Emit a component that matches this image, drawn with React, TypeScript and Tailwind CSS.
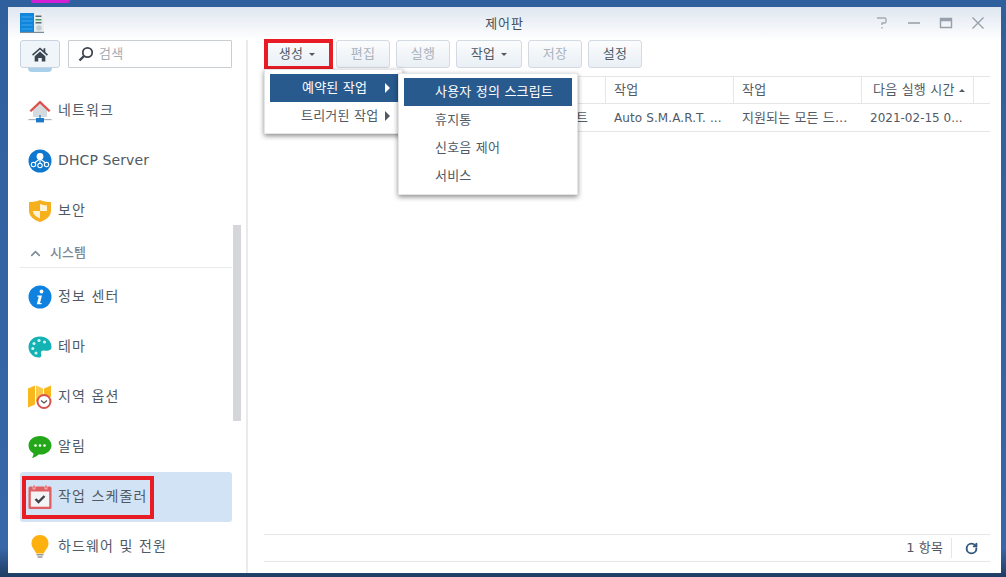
import React from 'react';
import { ChevronUp, RotateCw } from 'lucide-react';

const font = { fontFamily: '"DejaVu Sans", "Noto Sans CJK KR", sans-serif' };

const NetworkIcon = () => (
  <svg viewBox="0 0 24 24" className="w-6 h-6">
    <path d="M5 11 12 4.600l7 6.400v7H5z" fill="#d5dade" />
    <path d="M1.500 11.500 12 1.500l10.500 10-1.700 1.600L12 4.800 3.200 13.100z" fill="#d9534f" />
    <rect x="0.500" y="20" width="23" height="1.200" fill="#a9b4bd" />
    <rect x="11.400" y="16" width="1.200" height="4" fill="#1b79c9" />
    <rect x="8" y="19" width="8" height="4.400" fill="#1b79c9" />
  </svg>
);

const DhcpIcon = () => (
  <svg viewBox="0 0 24 24" className="w-6 h-6">
    <circle cx="12" cy="12" r="11.500" fill="#0e78cf" />
    <circle cx="12" cy="7.500" r="3.400" fill="#fff" />
    <path d="M12 10v5M11 10.500 6.500 14M13 10.500l4.500 3.500" stroke="#fff" strokeWidth="1.100" fill="none" />
    <circle cx="5.500" cy="15.500" r="2.200" fill="none" stroke="#fff" strokeWidth="1.100" />
    <circle cx="12" cy="16.500" r="2.200" fill="none" stroke="#fff" strokeWidth="1.100" />
    <circle cx="18.500" cy="15.500" r="2.200" fill="none" stroke="#fff" strokeWidth="1.100" />
  </svg>
);

const ShieldIcon = () => (
  <svg viewBox="0 0 24 24" className="w-6 h-6">
    <path d="M12 1c3 1.500 7 2 11 2v9c0 5-5 9-11 11C6 21 1 17 1 12V3c4 0 8-.5 11-2z" fill="#f6b01e" />
    <path d="M12 5c2 .8 4.500 1.300 7 1.400V12h-7zM12 12v7.500c-3-1.300-7-3.500-7-7.500z" fill="#fff3d6" />
  </svg>
);

const InfoIcon = () => (
  <svg viewBox="0 0 24 24" className="w-6 h-6">
    <circle cx="12" cy="12" r="11.500" fill="#0e82de" />
    <circle cx="13.500" cy="6.500" r="1.900" fill="#fff" />
    <path d="M9.500 10.500h4.500l-2 7.500h1.800l-.4 1.300H8.800l1.900-7.500H9.200z" fill="#fff" />
  </svg>
);

const ThemeIcon = () => (
  <svg viewBox="0 0 24 24" className="w-6 h-6">
    <path d="M12 1.500C5 1.500.5 6.500.5 12S5 22.500 11 22.500c3 0 2.500-2.500 2-4-.5-2 1-3.300 3-3 3 .5 7.500.5 7.500-3.500C23.500 6 18.500 1.500 12 1.500z" fill="#14b3b3" />
    <circle cx="6" cy="8.500" r="1.500" fill="#d5f3f3" />
    <circle cx="11" cy="5.500" r="1.600" fill="#d5f3f3" />
    <circle cx="16.500" cy="7" r="1.500" fill="#d5f3f3" />
    <circle cx="4.800" cy="13.500" r="1.500" fill="#d5f3f3" />
    <circle cx="8" cy="18" r="1.500" fill="#d5f3f3" />
  </svg>
);

const RegionIcon = () => (
  <svg viewBox="0 0 24 24" className="w-6 h-6">
    <path d="M0 3.500 7 .5v19l-7 3z" fill="#f8b71c" />
    <path d="M8 .5l7 3v16l-7-3z" fill="#fbc94a" />
    <path d="M16 3.500l7-3V12H16z" fill="#f8b71c" />
    <circle cx="16" cy="16.500" r="6.500" fill="#fff" stroke="#d9534f" strokeWidth="2" />
    <path d="M13 15.500l3 2.500 3-2.500" stroke="#555" strokeWidth="1.300" fill="none" />
  </svg>
);

const NoticeIcon = () => (
  <svg viewBox="0 0 24 24" className="w-6 h-6">
    <path d="M12 1C5.500 1 0.500 5 0.500 10.500c0 3.500 2 6.300 5 8 0 1.500-.5 3-1.500 4.500 2.500-.5 4.800-1.800 6.500-3.500.5 0 1 .1 1.500.1 6.500 0 11.500-4 11.500-9.100S18.500 1 12 1z" fill="#24a81a" />
    <circle cx="7.500" cy="10.500" r="1.300" fill="#fff" />
    <circle cx="12" cy="10.500" r="1.300" fill="#fff" />
    <circle cx="16.500" cy="10.500" r="1.300" fill="#fff" />
  </svg>
);

const SchedulerIcon = () => (
  <svg viewBox="0 0 24 24" className="w-6 h-6">
    <rect x="0.500" y="1.500" width="23" height="22.500" rx="1.500" fill="#df5f63" />
    <rect x="2.800" y="6.500" width="18.400" height="15.200" fill="#f3f4f5" />
    <rect x="5" y="0" width="2" height="4" fill="#df5f63" stroke="#fff" strokeWidth="0.500" />
    <rect x="17" y="0" width="2" height="4" fill="#df5f63" stroke="#fff" strokeWidth="0.500" />
    <path d="M7.500 14l3 3 6-6" stroke="#3f444a" strokeWidth="2.400" fill="none" />
  </svg>
);

const BulbIcon = () => (
  <svg viewBox="0 0 24 24" className="w-6 h-6">
    <path d="M12 0C6 0 3.500 4.500 3.500 8.500c0 4.500 3.500 6 4.500 10h8c1-4 4.500-5.500 4.500-10C20.500 4.500 18 0 12 0z" fill="#fdb10f" />
    <rect x="8.500" y="19" width="7" height="1.500" fill="#9a9a9a" />
    <rect x="9.500" y="21.300" width="5" height="1.500" fill="#9a9a9a" />
  </svg>
);

const sideItems: { label: string; icon: React.ReactNode; latin?: boolean }[] = [
  { label: '네트워크', icon: <NetworkIcon /> },
  { label: 'DHCP Server', icon: <DhcpIcon />, latin: true },
  { label: '보안', icon: <ShieldIcon /> },
];

const systemItems: { label: string; icon: React.ReactNode; active?: boolean }[] = [
  { label: '정보 센터', icon: <InfoIcon /> },
  { label: '테마', icon: <ThemeIcon /> },
  { label: '지역 옵션', icon: <RegionIcon /> },
  { label: '알림', icon: <NoticeIcon /> },
  { label: '작업 스케줄러', icon: <SchedulerIcon />, active: true },
  { label: '하드웨어 및 전원', icon: <BulbIcon /> },
];

const SideRow = ({ label, icon, active, latin }: { label: string; icon: React.ReactNode; active?: boolean; latin?: boolean }) => (
  <div className={`h-[50px] flex items-center gap-[6px] pl-2 rounded-[3px] shrink-0 ${active ? 'bg-[#d2e3f6]' : ''}`}>
    {icon}
    <span className={`text-[#505a64] whitespace-nowrap pb-[2px] ${latin ? 'text-[14px] tracking-[0.1px]' : 'text-[14px] tracking-[1.1px]'}`}>{label}</span>
  </div>
);

const ToolButton = ({ label, disabled, caret, w }: { label: string; disabled?: boolean; caret?: boolean; w: string }) => (
  <button className={`h-[28px] ${w} flex items-center justify-center gap-[6px] rounded-[3px] border border-[#d3dae2] bg-gradient-to-b from-[#fbfcfd] to-[#e9eff5] text-[13px] tracking-[0.2px] ${disabled ? 'text-[#a9b2ba]' : 'text-[#505a64]'}`}>
    {label}
    {caret && <span className="w-0 h-0 border-x-[3px] border-x-transparent border-t-[3px] border-t-[#505a64]" />}
  </button>
);

const Arrow = ({ className }: { className: string }) => (
  <span className={`w-0 h-0 border-y-[5px] border-y-transparent border-l-[5px] ${className}`} />
);

export default function App() {
  return (
    <div style={font} className="relative w-full h-[577px] overflow-hidden bg-gradient-to-b from-[#2f5f9c] via-[#3767a8] via-95% to-[#1f3d63] pt-[7px] pl-[8px] pr-[5px] pb-[4px]">
      <div className="absolute left-[31px] top-0 w-[39px] h-[3px] bg-[#d41fd6] rounded-b-sm" />
      <div className="relative h-full bg-white flex flex-col overflow-hidden">
        {/* title bar */}
        <div className="h-[33px] shrink-0 relative flex items-center justify-center bg-gradient-to-b from-[#dfe6f0] to-white">
          <svg viewBox="0 0 24 20" className="absolute left-[12px] top-[6px] w-[24px] h-[20px]">
            <rect x="0" y="0" width="14" height="19" fill="#0f86dd" />
            <path d="M1.500 4h11M1.500 8h11M1.500 12h11M1.500 16h11" stroke="#5db4ee" strokeWidth="0.700" />
            <rect x="14" y="0" width="10" height="19" fill="#e8edf0" />
            <rect x="15.500" y="2.500" width="6" height="1.500" fill="#5a6a75" />
            <rect x="15.500" y="6" width="6" height="1.500" fill="#4a9b5c" />
            <rect x="15.500" y="9" width="6" height="1.500" fill="#5a6a75" />
            <circle cx="19" cy="15" r="2.800" fill="#c6ced4" />
            <rect x="0" y="18.800" width="24" height="1.200" fill="#7d8b95" />
          </svg>
          <span className="text-[13px] tracking-[0.8px] text-[#42505c]">제어판</span>
          <div className="absolute right-[15px] top-[8px] flex items-center gap-[16px]">
            <svg viewBox="0 0 16 16" className="w-4 h-4"><path d="M3 3h8l1 1v3l-1 1H8v2M8 12v1.500" stroke="#a3abb2" strokeWidth="1.400" fill="none" /></svg>
            <svg viewBox="0 0 16 16" className="w-4 h-4"><path d="M2 8h12" stroke="#98a1a9" strokeWidth="1.600" /></svg>
            <svg viewBox="0 0 16 16" className="w-4 h-4"><path d="M2.500 3.500h11v9h-11z" fill="none" stroke="#98a1a9" strokeWidth="1.400" /><path d="M2.500 5h11" stroke="#98a1a9" strokeWidth="2.500" /></svg>
            <svg viewBox="0 0 16 16" className="w-4 h-4"><path d="M2.500 2.500l11 11M13.500 2.500l-11 11" stroke="#98a1a9" strokeWidth="1.400" /></svg>
          </div>
        </div>

        <div className="flex-1 flex min-h-0">
          {/* sidebar */}
          <div className="relative w-[240px] shrink-0 border-r-2 border-[#e8eaec] overflow-hidden pl-[12px] pr-[14px]">
            <div className="flex gap-[8px] h-[28px]">
              <button className="w-[40px] h-[28px] flex items-center justify-center rounded-[3px] border border-[#c9d3dd] bg-[#f0f5fa]">
                <svg viewBox="0 0 18 16" className="w-[16px] h-[15px]"><path d="M9 0 0 8l1.200 1.300L9 2.500l7.800 6.800L18 8l-3-2.700V1h-2v2.500zM3 10v6h4v-4h4v4h4v-6L9 4.500z" fill="#3c4650" /></svg>
              </button>
              <div className="flex-1 flex items-center gap-[5px] pl-[9px] border border-[#c9ced3] rounded-[1px]">
                <svg viewBox="0 0 16 16" className="w-[16px] h-[16px]"><circle cx="9.500" cy="6.500" r="4.700" fill="none" stroke="#3c4650" strokeWidth="1.800" /><path d="M6 10 1.500 14.500" stroke="#3c4650" strokeWidth="2.400" /></svg>
                <span className="text-[13px] text-[#a4abb2] tracking-[0.3px]">검색</span>
              </div>
            </div>
            <div className="w-[24px] h-[4px] ml-[8px] rounded-b-full bg-[#a9d0ea]" />
            <div className="flex flex-col pt-[14px]">
              {sideItems.map((s) => (
                <SideRow key={s.label} label={s.label} icon={s.icon} latin={s.latin} />
              ))}
              <div className="h-[29px] flex items-center gap-[7px] pl-[8px] border-b border-[#e8ebee] shrink-0 mt-[3px] text-[#7b8a97]">
                <ChevronUp size={15} strokeWidth={2.500} />
                <span className="text-[13px] font-medium">시스템</span>
              </div>
              <div className="h-[4px] shrink-0" />
              {systemItems.map((s) => (
                <SideRow key={s.label} label={s.label} icon={s.icon} active={s.active} />
              ))}
            </div>
            {/* scrollbar thumb */}
            <div className="absolute left-[225px] top-[185px] w-[8px] h-[196px] bg-[#d4d6d9]" />
            {/* annotation */}
            <div className="absolute left-[14px] top-[436px] w-[132px] h-[43px] border-[4px] border-[#e81c24]" />
          </div>

          {/* main */}
          <div className="relative flex-1 flex flex-col min-w-0 pl-[16px] pr-[11px]">
            <div className="flex gap-[6px] h-[36px] items-start shrink-0">
              <ToolButton label="생성" caret w="w-[64px] ml-[2px] pr-[2px]" />
              <ToolButton label="편집" disabled w="w-[54px]" />
              <ToolButton label="실행" disabled w="w-[54px]" />
              <ToolButton label="작업" caret w="w-[66px]" />
              <ToolButton label="저장" disabled w="w-[54px]" />
              <ToolButton label="설정" w="w-[54px]" />
            </div>

            <div className="flex h-[28px] shrink-0 border-y border-[#e3e7ea] text-[13px] tracking-[0.2px] text-[#505a64]">
              <div className="w-[342px] border-r border-[#e3e7ea]" />
              <div className="w-[128px] pl-[8px] border-r border-[#e3e7ea] flex items-center">작업</div>
              <div className="w-[128px] pl-[8px] border-r border-[#e3e7ea] flex items-center">작업</div>
              <div className="w-[112px] pl-[11px] border-r border-[#e3e7ea] flex items-center gap-[4px] whitespace-nowrap">
                다음 실행 시간
                <span className="w-0 h-0 border-x-[3px] border-x-transparent border-b-[3px] border-b-[#505a64]" />
              </div>
            </div>
            <div className="flex h-[28px] shrink-0 border-b border-[#e3e7ea] text-[12px] text-[#505a64] items-center whitespace-nowrap">
              <div className="w-[324px] text-right text-[13px]">트</div>
              <div className="w-[18px]" />
              <div className="w-[128px] pl-[8px] tracking-[0.1px]">Auto S.M.A.R.T. ...</div>
              <div className="w-[128px] pl-[8px] text-[13px] tracking-[0.1px]">지원되는 모든 드...</div>
              <div className="w-[112px] pl-[8px]">2021-02-15 0...</div>
            </div>

            <div className="flex-1" />

            <div className="h-[28px] shrink-0 mb-[11px] border-y border-[#e3e7ea] flex items-center justify-end text-[13px] tracking-[0.1px] text-[#505a64]">
              <span>1 항목</span>
              <div className="w-px h-[20px] bg-[#e3e7ea] ml-[8px] mr-[13px]" />
              <RotateCw size={13} strokeWidth={3.500} className="text-[#31567f] mr-[12px]" />
            </div>

            {/* red annotation around the create button */}
            <div className="absolute left-[16px] top-[-1px] w-[69px] h-[31px] border-[4px] border-[#e81c24]" />

            {/* create menu */}
            <div className="absolute left-[16px] top-[29px] w-[139px] h-[65px] bg-white border border-[#e3e5e7] shadow-[0_2px_5px_rgba(0,0,0,0.45)] pt-[4px] px-[5px] text-[13px] tracking-[0.2px] text-[#505a64]">
              <div className="h-[28px] w-[128px] bg-[#285a8e] text-white flex items-center justify-between pl-[32px] pr-[8px] whitespace-nowrap">
                예약된 작업
                <Arrow className="border-l-white" />
              </div>
              <div className="h-[28px] w-[128px] flex items-center justify-between pl-[31px] pr-[8px] whitespace-nowrap">
                트리거된 작업
                <Arrow className="border-l-[#505a64]" />
              </div>
            </div>
            <div className="absolute left-[150px] top-[33px] w-[180px] h-[122px] bg-white border border-[#e3e5e7] shadow-[0_2px_5px_rgba(0,0,0,0.45)] pt-[4px] px-[5px] text-[13px] tracking-[0.2px] text-[#505a64]">
              <div className="h-[28px] bg-[#285a8e] text-white flex items-center pl-[31px] whitespace-nowrap">사용자 정의 스크립트</div>
              <div className="h-[28px] flex items-center pl-[31px]">휴지통</div>
              <div className="h-[28px] flex items-center pl-[31px]">신호음 제어</div>
              <div className="h-[28px] flex items-center pl-[31px]">서비스</div>
            </div>
          </div>
        </div>
      </div>
    </div>
  );
}
